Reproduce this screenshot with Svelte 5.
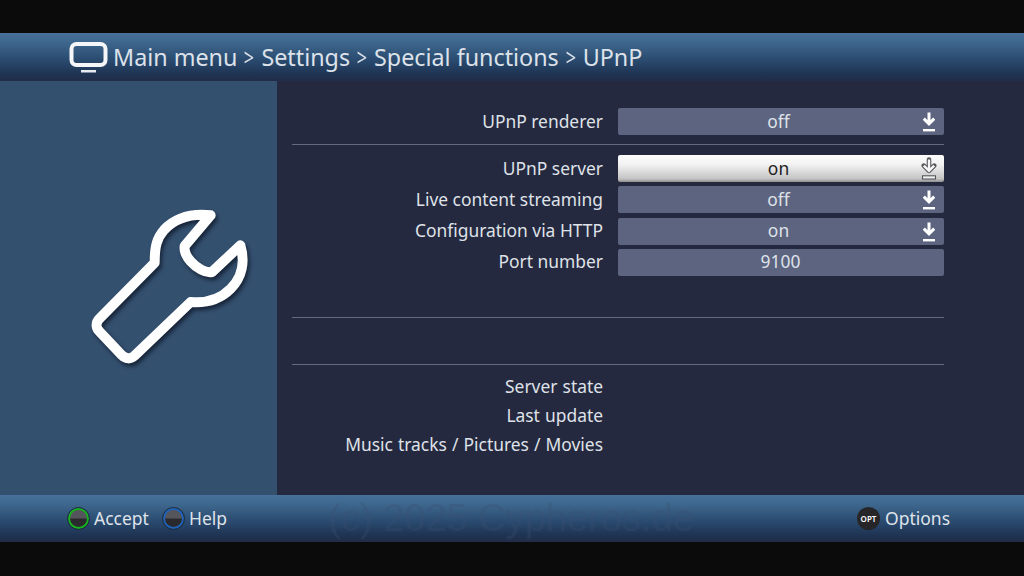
<script lang="ts">
  const group1 = [{ label: 'UPnP renderer', value: 'off', arrow: true }];
  const group2 = [
    { label: 'UPnP server', value: 'on', arrow: true, active: true },
    { label: 'Live content streaming', value: 'off', arrow: true },
    { label: 'Configuration via HTTP', value: 'on', arrow: true },
    { label: 'Port number', value: '9100', arrow: false }
  ];
  const crumbs = ['Main menu', 'Settings', 'Special functions', 'UPnP'];
  const info = ['Server state', 'Last update', 'Music tracks / Pictures / Movies'];
</script>

{#snippet row(item)}
  <div class="row">
    <span class="label">{item.label}</span>
    <div class="field" class:active={item.active} class:has-arrow={item.arrow}>
      <span>{item.value}</span>
      {#if item.arrow}
        <svg class="arrow" width="16" height="27" viewBox="0 0 16 27" fill="none">
          {#if item.active}
            <path d="M8 4.5V15.5M2.8 10.6L8 15.8L13.2 10.6" stroke="#55565c" stroke-width="4.6" stroke-linejoin="round" stroke-linecap="round" />
            <rect x="1.5" y="20.8" width="13" height="3.2" fill="#f2f2f2" stroke="#55565c" stroke-width="1.1" />
          {/if}
          <path
            d="M8 4.5V15.5M2.8 10.6L8 15.8L13.2 10.6"
            stroke={item.active ? '#f6f6f6' : '#fff'}
            stroke-width={item.active ? 2.4 : 3}
          />
          {#if !item.active}
            <rect x="2" y="21" width="12" height="2.4" fill="#fff" />
          {/if}
        </svg>
      {/if}
    </div>
  </div>
{/snippet}

<div class="screen">
  <header class="bar top">
    <svg class="tv" width="40" height="34" viewBox="0 0 40 34">
      <rect x="2.5" y="3" width="34" height="21" rx="5" fill="none" stroke="#f4f6f8" stroke-width="4" />
      <rect x="12" y="29" width="15" height="2.5" fill="#e8ebef" />
    </svg>
    <h1>
      {#each crumbs as crumb, i}
        {#if i > 0}<span class="sep">&gt;</span>{/if}
        <span>{crumb}</span>
      {/each}
    </h1>
  </header>

  <main class="body">
    <aside class="side">
      <svg class="wrench" width="220" height="190" viewBox="0 0 660 570">
        <path
          d="M452 76C395 70 345 85 312 120C290 145 284 170 284 218L118 386C106 398 108 414 118 424L186 496C198 508 212 508 224 497L392 336C440 340 480 328 512 296C546 262 556 215 541 166L456 246C436 250 410 234 392 214C378 198 372 182 374 168Z"
          fill="none"
          stroke="#fff"
          stroke-width="30"
          stroke-linejoin="round"
        />
      </svg>
    </aside>

    <section class="content">
      <div class="group first">
        {#each group1 as item}{@render row(item)}{/each}
      </div>
      <div class="group second">
        {#each group2 as item}{@render row(item)}{/each}
      </div>
      <div class="spacer"></div>
      <div class="info">
        {#each info as text}
          <div class="info-row">{text}</div>
        {/each}
      </div>
    </section>
  </main>

  <footer class="bar bottom">
    <div class="hint"><span class="key green"></span>Accept</div>
    <div class="hint"><span class="key blue"></span>Help</div>
    <div class="hint opt"><span class="key-opt">OPT</span>Options</div>
    <span class="mark">(c) 2025 Cypheros.de</span>
  </footer>
</div>

<style>
  :global(body) {
    margin: 0;
    background: #0b0b0c;
  }

  .screen {
    width: 1024px;
    height: 576px;
    padding: 33px 0 34px;
    box-sizing: border-box;
    display: flex;
    flex-direction: column;
    font-family: "Noto Sans", "Open Sans", sans-serif;
    color: #dfe2e8;
    overflow: hidden;
  }

  .bar {
    display: flex;
    align-items: center;
    background: linear-gradient(#47709a 0%, #3f688f 18%, #27466a 62%, #1f3453 85%, #222c48 100%);
  }

  .top {
    height: 48px;
    padding-left: 69px;
    gap: 4px;
  }

  .tv {
    flex: none;
    margin-top: 1px;
  }

  h1 {
    margin: 0;
    display: flex;
    font-size: 23.3px;
    font-weight: 400;
    color: #dde2ea;
    white-space: nowrap;
  }

  .sep {
    width: 24px;
    transform: scaleX(0.78);
    text-align: center;
  }

  .body {
    flex: 1;
    display: flex;
    background: #25293f;
  }

  .side {
    width: 277px;
    flex: none;
    background: #34506f;
    display: flex;
    align-items: center;
    padding: 0 0 6px 60px;
    box-sizing: border-box;
  }

  .wrench {
    flex: none;
    overflow: visible;
    filter: drop-shadow(2px 3px 2px rgba(12, 20, 36, 0.75));
  }

  .content {
    width: 651.5px;
    margin-left: 15px;
    padding-top: 27px;
    display: flex;
    flex-direction: column;
  }

  .group {
    display: flex;
    flex-direction: column;
    gap: 4.3px;
  }

  .first {
    padding-bottom: 9px;
    border-bottom: 1px solid #626a81;
  }

  .second {
    padding-top: 10px;
  }

  .row {
    display: grid;
    grid-template-columns: 311px 326px;
    column-gap: 14.5px;
    align-items: center;
    height: 27px;
  }

  .label {
    text-align: right;
    font-size: 17.4px;
    white-space: nowrap;
    padding-bottom: 2px;
  }

  .field {
    position: relative;
    height: 27px;
    border-radius: 2px;
    background: #5c6480;
    color: #dfe2e8;
    font-size: 17.4px;
    display: flex;
    align-items: center;
    justify-content: center;
    padding-bottom: 2px;
    box-sizing: border-box;
  }

  .has-arrow {
    padding-right: 4px;
  }

  .field.active {
    background: linear-gradient(#fdfdfd 0%, #f2f2f2 35%, #c4c4c4 88%, #8e8e8e 100%);
    color: #1d1d1f;
  }

  .arrow {
    position: absolute;
    right: 7px;
    top: 0;
  }

  .spacer {
    height: 41px;
    border-bottom: 1px solid #626a81;
  }

  .info {
    margin-top: 46px;
    border-top: 1px solid #626a81;
    padding-top: 7px;
    display: flex;
    flex-direction: column;
  }

  .info-row {
    width: 311px;
    height: 29px;
    line-height: 28px;
    text-align: right;
    font-size: 17.4px;
    word-spacing: 0.6px;
    white-space: nowrap;
  }

  .bottom {
    position: relative;
    height: 47px;
    padding-left: 68px;
    font-size: 17.5px;
    color: #dfe3ea;
  }

  .hint {
    display: flex;
    align-items: center;
    gap: 5px;
    margin-right: 14px;
    padding-bottom: 1px;
  }

  .key {
    width: 17px;
    height: 17px;
    border-radius: 50%;
    border: 2px solid;
    outline: 1px solid #1b2a3a;
    background: linear-gradient(#55555c 0 45%, #2a2a2e 55% 100%);
    flex: none;
  }

  .green {
    border-color: #17b31c;
  }

  .blue {
    border-color: #1f62b8;
  }

  .opt {
    position: absolute;
    left: 857px;
    margin: 0;
    top: 11px;
  }

  .key-opt {
    width: 23px;
    height: 23px;
    border-radius: 50%;
    background: #262629;
    color: #fff;
    font-size: 8px;
    font-weight: 600;
    display: flex;
    align-items: center;
    justify-content: center;
  }

  .mark {
    position: absolute;
    left: 0;
    right: 2px;
    top: 1px;
    text-align: center;
    font-family: "Liberation Sans", sans-serif;
    font-size: 38px;
    line-height: 44px;
    color: rgba(58, 80, 114, 0.32);
    white-space: nowrap;
  }
</style>
